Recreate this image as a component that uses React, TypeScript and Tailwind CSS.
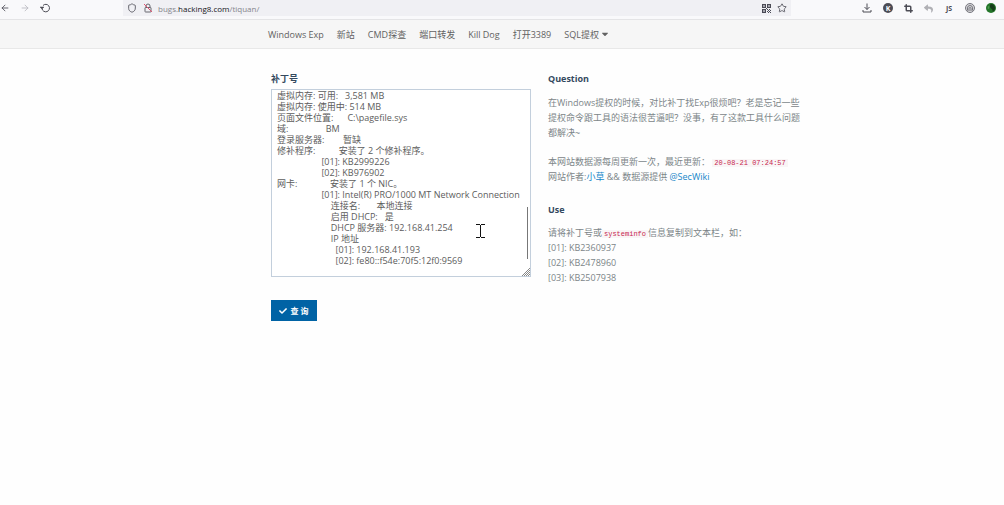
import { LuArrowLeft, LuArrowRight, LuShield, LuStar, LuCrop } from "react-icons/lu";
import { FaCaretDown, FaCheck, FaReply } from "react-icons/fa";

const navLinks = ["Windows Exp", "新站", "CMD探查", "端口转发", "Kill Dog", "打开3389"];

const systemInfo = `虚拟内存: 可用:   3,581 MB
虚拟内存: 使用中: 514 MB
页面文件位置:      C:\\pagefile.sys
域:                BM
登录服务器:        暂缺
修补程序:          安装了 2 个修补程序。
                   [01]: KB2999226
                   [02]: KB976902
网卡:              安装了 1 个 NIC。
                   [01]: Intel(R) PRO/1000 MT Network Connection
                       连接名:       本地连接
                       启用 DHCP:   是
                       DHCP 服务器: 192.168.41.254
                       IP 地址
                         [01]: 192.168.41.193
                         [02]: fe80::f54e:70f5:12f0:9569`;

function ReloadIcon() {
  return (
    <svg width="10" height="10" viewBox="0 0 20 20" fill="none" stroke="currentColor" strokeWidth="2">
      <path d="M4 11a7.500 7.500 0 1 0 2-6" />
      <path d="M0 8l4 4 4-4z" fill="currentColor" strokeWidth="1" />
    </svg>
  );
}

function LockOffIcon() {
  return (
    <svg width="10" height="10" viewBox="0 0 20 20" fill="none" stroke="#66666e" strokeWidth="2">
      <path d="M6 9V6a4 4 0 0 1 8 0v3" />
      <rect x="4" y="9" width="12" height="9" rx="1" />
      <path d="M2 2l16 16" stroke="#e2506e" />
    </svg>
  );
}

function QrIcon() {
  return (
    <svg width="9" height="9" viewBox="0 0 9 9" fill="#4a4a55">
      <path d="M0 0h4v4H0zM5 0h4v4H5zM0 5h4v4H0zM5 5h1v1H5zM7 5h1v1H7zM6 6h1v1H6zM8 6h1v1H8zM5 7h1v1H5zM7 7h1v1H7zM6 8h1v1H6zM8 8h1v1H8zM4 4h1v1H4z" />
      <path d="M1 1h2v2H1zM6 1h2v2H6zM1 6h2v2H1z" fill="#a5a5ac" />
    </svg>
  );
}

function DownloadIcon() {
  return (
    <svg width="10" height="10" viewBox="0 0 20 20" fill="none" stroke="currentColor" strokeWidth="2">
      <path d="M10 1v12M5 8l5 5 5-5M2 14v4h16v-4" />
    </svg>
  );
}

function FingerprintIcon() {
  return (
    <svg width="10" height="10" viewBox="0 0 20 20" fill="none" stroke="#77777e" strokeWidth="2">
      <circle cx="10" cy="10" r="9" fill="#d6d6da" />
      <path d="M5 15v-5a5 5 0 0 1 10 0v5M8 16v-5a2 2 0 0 1 4 0v5" />
    </svg>
  );
}

function GlobeIcon() {
  return (
    <svg width="10" height="10" viewBox="0 0 20 20">
      <circle cx="10" cy="10" r="10" fill="#23752a" />
      <path d="M9 2c5-1 9 3 9 8s-3 6-5 7c1-4-1-5-3-6s-3-5-1-9z" fill="#163d1b" />
      <path d="M4 6l3 1-1 5-3-1z" fill="#4d9b4f" />
    </svg>
  );
}

function BrowserBar() {
  return (
    <header className="h-5 flex items-start bg-[#f9f9fb] border-b border-[#e4e4e6] text-[#4c4c55]">
      <div className="w-[123px] h-4 flex items-center gap-[10px]">
        <button aria-label="Back">
          <LuArrowLeft size={10} />
        </button>
        <button aria-label="Forward" className="text-[#b8b8be]">
          <LuArrowRight size={10} />
        </button>
        <button aria-label="Reload">
          <ReloadIcon />
        </button>
      </div>
      <div className="w-[668px] h-4 flex items-center bg-[#f0f0f4] px-1">
        <LuShield size={10} />
        <span className="ml-[6px]">
          <LockOffIcon />
        </span>
        <span className="ml-[5px] grow text-[8px] text-[#85858c]">
          bugs.<span className="text-[#15141a]">hacking8.com</span>/tiquan/
        </span>
        <QrIcon />
        <button aria-label="Bookmark" className="ml-[6px]">
          <LuStar size={10} />
        </button>
      </div>
      <div className="grow h-4 flex items-center justify-end gap-[11px] pr-2">
        <DownloadIcon />
        <span className="size-[10px] rounded-full bg-[#4c4c55] text-white text-[7px] font-bold flex items-center justify-center">
          K
        </span>
        <LuCrop size={9} strokeWidth={4} />
        <FaReply size={9} className="text-[#b0b0b5]" />
        <span className="w-[10px] text-center text-[7px] font-bold">JS</span>
        <FingerprintIcon />
        <GlobeIcon />
      </div>
    </header>
  );
}

function Navbar() {
  return (
    <nav className="h-[29px] flex items-center gap-[13px] bg-[#f6f6f6] border-b border-[#e8e8e8] pl-[268px] text-[#626262]">
      {navLinks.map((link) => (
        <a href="#" key={link}>
          {link}
        </a>
      ))}
      <a href="#" className="flex items-center gap-[1px]">
        SQL提权
        <FaCaretDown size={10} />
      </a>
    </nav>
  );
}

function PatchForm() {
  return (
    <form className="w-[260px]">
      <label htmlFor="patches" className="block font-bold text-[#34495e]">
        补丁号
      </label>
      <div className="relative mt-[3px]">
        <textarea
          id="patches"
          defaultValue={systemInfo}
          className="block w-full h-[188px] resize-none overflow-hidden whitespace-pre border border-[#c3cfdc] bg-white px-[5px] leading-[11px] text-[#5c5c5c] outline-none"
        />
        <span className="absolute right-[3px] bottom-[18px] w-px h-[52px] bg-[#777]" />
        <svg className="absolute right-[1px] bottom-[1px]" width="8" height="8" viewBox="0 0 8 8" stroke="#888">
          <path d="M0 8l8-8M2 8l6-6M4 8l4-4M6 8l2-2" />
        </svg>
        <svg className="absolute left-[205px] top-[135px]" width="9" height="14" viewBox="0 0 9 14" stroke="#111" fill="none">
          <path d="M0 .5h4M5 .5h4M0 13.5h4M5 13.5h4M4.5 1v12" />
        </svg>
      </div>
      <button
        type="button"
        className="mt-[23px] h-[21px] w-[46px] flex items-center justify-center gap-[3px] bg-[#0063a5] text-[8px] font-semibold text-white"
      >
        <FaCheck size={8} />查 询
      </button>
    </form>
  );
}

function Code({ children }: { children: string }) {
  return (
    <code className="bg-[#f9f5f6] px-[2px] font-['Liberation_Mono',monospace] text-[7px] leading-none text-[#c7254e]">
      {children}
    </code>
  );
}

function Help() {
  return (
    <div className="w-[260px] text-[#7c8588]">
      <h5 className="font-bold text-[#34495e]">Question</h5>
      <p className="mt-[9px]">
        在Windows提权的时候，对比补丁找Exp很烦吧？老是忘记一些提权命令跟工具的语法很苦逼吧？没事，有了这款工具什么问题都解决~
      </p>
      <p className="mt-[14px]">
        本网站数据源每周更新一次，最近更新： <Code>20-08-21 07:24:57</Code>
        <br />
        网站作者:
        <a href="#" className="text-[#1787c9]">小草</a> && 数据源提供{" "}
        <a href="#" className="text-[#1787c9]">@SecWiki</a>
      </p>
      <h5 className="mt-[18px] font-bold text-[#34495e]">Use</h5>
      <p className="mt-[8px]">
        请将补丁号或
        <Code>systeminfo</Code>
        信息复制到文本栏，如：
        <br />
        [01]: KB2360937
        <br />
        [02]: KB2478960
        <br />
        [03]: KB2507938
      </p>
    </div>
  );
}

function App() {
  return (
    <div className="min-h-screen bg-[#fefefe] font-['Open_Sans','Noto_Sans_CJK_SC',sans-serif] text-[9px] leading-[15px]">
      <BrowserBar />
      <Navbar />
      <main className="flex gap-[17px] pl-[271px] pt-[22px]">
        <PatchForm />
        <Help />
      </main>
    </div>
  );
}

export default App;
